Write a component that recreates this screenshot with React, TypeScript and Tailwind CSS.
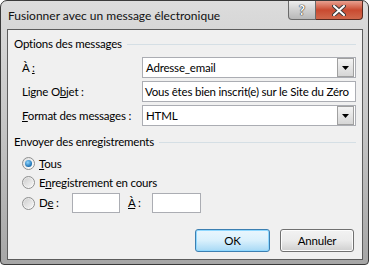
import React from "react";

const font = { fontFamily: 'Lato, "Open Sans", sans-serif' };

function DropBtn() {
  return (
    <div className="w-[17px] h-[19px] mr-[1px] border border-[#a0a0a0] bg-gradient-to-b from-[#f4f4f4] to-[#d6d6d6] flex items-center justify-center">
      <svg width="7" height="4" viewBox="0 0 7 4">
        <path d="M0 0 H7 L3.5 4 Z" fill="#000" />
      </svg>
    </div>
  );
}

function Radio({ checked }: { checked?: boolean }) {
  return (
    <div className="w-[13px] h-[13px] shrink-0 rounded-full border border-[#8e8f8f] bg-gradient-to-br from-[#e0e0e0] to-[#ffffff] flex items-center justify-center">
      {checked ? (
        <div className="w-[7px] h-[7px] rounded-full bg-[radial-gradient(circle_at_40%_35%,#8fd6ff,#1a6fb2_70%,#0d4f86)]" />
      ) : (
        <div className="w-[9px] h-[9px] rounded-full bg-gradient-to-br from-[#cfcfcf] to-[#f6f6f6]" />
      )}
    </div>
  );
}

export default function App() {
  return (
    <div className="w-[369px] h-[267px] bg-white text-[11.5px] tracking-[-0.2px] text-black whitespace-nowrap" style={font}>
      <div className="w-[369px] h-[265px] rounded-t-[7px] rounded-b-[4px] border border-[#3a3a3a] bg-gradient-to-b from-[#dcdcdc] via-[#c4c4c4] to-[#a6a6a6] flex flex-col">
        {/* title bar */}
        <div className="h-[28px] flex items-start">
          <div className="pl-[7px] pt-[6px] text-[12px] tracking-normal leading-[18px] text-[#111]">
            Fusionner avec un message électronique
          </div>
          <div className="ml-auto mr-[5px] flex">
            <div className="w-[28px] h-[19px] rounded-bl-[4px] border border-t-0 border-[#6a6a6a] bg-gradient-to-b from-[#eeeeee] via-[#d0d0d0] to-[#b8b8b8] flex items-center justify-center">
              <span className="text-white font-bold text-[13px] leading-none [text-shadow:0_0_1px_#333,0_0_1px_#333,0_0_1px_#333]">?</span>
            </div>
            <div className="w-[47px] h-[19px] rounded-br-[4px] border border-l-0 border-t-0 border-[#5a2a20] bg-gradient-to-b from-[#e8a090] via-[#c94a30] to-[#d0684c] flex items-center justify-center">
              <svg width="14" height="11" viewBox="0 0 14 11">
                <path d="M2 1 L12 10 M12 1 L2 10" stroke="#3a3a3a" strokeWidth="4" strokeLinecap="round" />
                <path d="M2 1 L12 10 M12 1 L2 10" stroke="#fff" strokeWidth="2" strokeLinecap="round" />
              </svg>
            </div>
          </div>
        </div>
        {/* client */}
        <div className="ml-[6px] mr-[5px] h-[231px] border border-[#5c5c5c] bg-[#f0f0f0] flex flex-col">
          <div className="mt-[6px] h-[16px] flex items-center pl-[6px]">
            <span className="leading-[16px]">Options des messages</span>
            <div className="flex-1 h-px bg-[#d5dfe5] ml-[5px] mr-[6px]" />
          </div>
          <div className="mt-[5px] flex flex-col gap-[3px]">
            <div className="h-[21px] flex items-center">
              <div className="w-[134px] pl-[14px]">À <u>:</u></div>
              <div className="w-[214px] h-[21px] border border-[#abadb3] bg-white flex items-center">
                <span className="pl-[3px] flex-1">Adresse_email</span>
                <DropBtn />
              </div>
            </div>
            <div className="h-[21px] flex items-center">
              <div className="w-[134px] pl-[14px]">Ligne O<u>b</u>jet :</div>
              <div className="w-[214px] h-[21px] border border-[#abadb3] bg-white flex items-center overflow-hidden">
                <span className="pl-[2px]">Vous êtes bien inscrit(e) sur le Site du Zéro</span>
              </div>
            </div>
            <div className="h-[21px] flex items-center">
              <div className="w-[134px] pl-[14px]"><u>F</u>ormat des messages :</div>
              <div className="w-[214px] h-[21px] border border-[#abadb3] bg-white flex items-center">
                <span className="pl-[3px] flex-1">HTML</span>
                <DropBtn />
              </div>
            </div>
          </div>
          <div className="mt-[8px] h-[16px] flex items-center pl-[6px]">
            <span className="leading-[16px]">Envoyer des enregistrements</span>
            <div className="flex-1 h-px bg-[#d5dfe5] ml-[5px] mr-[6px]" />
          </div>
          <div className="mt-[4px] flex flex-col pl-[14px]">
            <div className="h-[19px] flex items-center gap-[4px]">
              <Radio checked />
              <span><u>T</u>ous</span>
            </div>
            <div className="h-[19px] flex items-center gap-[4px]">
              <Radio />
              <span>E<u>n</u>registrement en cours</span>
            </div>
            <div className="mt-[1px] h-[20px] flex items-center">
              <Radio />
              <span className="ml-[4px] w-[33px]">D<u>e</u> :</span>
              <div className="w-[48px] h-[20px] border border-[#abadb3] bg-white" />
              <span className="ml-[8px] w-[24px]"><u>À</u> :</span>
              <div className="w-[49px] h-[20px] border border-[#abadb3] bg-white" />
            </div>
          </div>
          <div className="mt-[16px] flex justify-end pr-[8px] gap-[10px]">
            <div className="w-[75px] h-[23px] rounded-[3px] border border-[#3c7fb1] bg-gradient-to-b from-[#eaf6fd] via-[#d9f0fc] to-[#a7d9f5] shadow-[inset_0_0_0_1px_#8fd8ff] flex items-center justify-center">
              OK
            </div>
            <div className="w-[74px] h-[23px] rounded-[3px] border border-[#707070] bg-gradient-to-b from-[#f2f2f2] via-[#ebebeb] to-[#cfcfcf] shadow-[inset_0_0_0_1px_#fcfcfc] flex items-center justify-center">
              Annuler
            </div>
          </div>
        </div>
      </div>
    </div>
  );
}
